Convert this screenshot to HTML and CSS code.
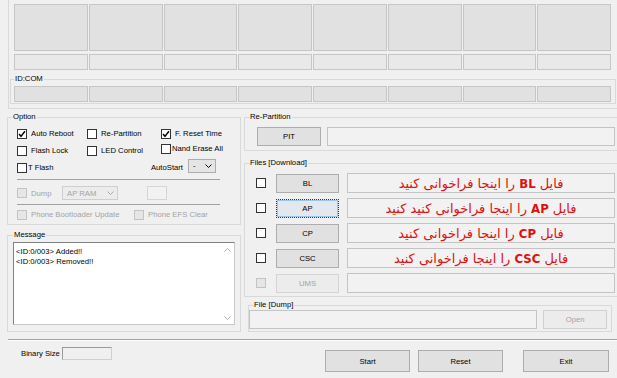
FILE: index.html
```html
<!DOCTYPE html>
<html lang="en">
<head>
    <meta charset="UTF-8">
    <title>Odin3</title>
    <link rel="stylesheet" href="styles.css">
</head>
<body>
    <div class="top-box">
        <div class="slots slots-big">
            <div class="slot"></div><div class="slot"></div><div class="slot"></div><div class="slot"></div>
            <div class="slot"></div><div class="slot"></div><div class="slot"></div><div class="slot"></div>
        </div>
        <div class="slots slots-small">
            <div class="slot"></div><div class="slot"></div><div class="slot"></div><div class="slot"></div>
            <div class="slot"></div><div class="slot"></div><div class="slot"></div><div class="slot"></div>
        </div>
        <fieldset class="group idcom">
            <legend>ID:COM</legend>
            <div class="slots slots-com">
                <div class="slot"></div><div class="slot"></div><div class="slot"></div><div class="slot"></div>
                <div class="slot"></div><div class="slot"></div><div class="slot"></div><div class="slot"></div>
            </div>
        </fieldset>
    </div>

    <div class="main">
        <div class="left-col">
            <fieldset class="group option">
                <legend>Option</legend>
                <div class="opt-row">
                    <label class="opt col1"><span class="check checked"><svg width="8" height="8" viewBox="0 0 8 8"><path d="M1 4 L3 6.3 L7 1.2" fill="none" stroke="#000" stroke-width="1.4"/></svg></span>Auto Reboot</label>
                    <label class="opt col2"><span class="check"></span>Re-Partition</label>
                    <label class="opt"><span class="check checked"><svg width="8" height="8" viewBox="0 0 8 8"><path d="M1 4 L3 6.3 L7 1.2" fill="none" stroke="#000" stroke-width="1.4"/></svg></span>F. Reset Time</label>
                </div>
                <div class="opt-row">
                    <label class="opt col1"><span class="check"></span>Flash Lock</label>
                    <label class="opt col2"><span class="check"></span>LED Control</label>
                    <label class="opt opt-up"><span class="check tight"></span>Nand Erase All</label>
                </div>
                <div class="opt-row">
                    <label class="opt col1"><span class="check tight"></span>T Flash</label>
                    <div class="autostart">
                        <span>AutoStart</span>
                        <span class="select select-auto">-<svg width="7" height="4" viewBox="0 0 7 4"><path d="M0.5 0.5 L3.5 3.5 L6.5 0.5" fill="none" stroke="#000"/></svg></span>
                    </div>
                </div>
                <div class="sep"></div>
                <div class="dump-row">
                    <label class="opt disabled dump-label"><span class="check"></span>Dump</label>
                    <span class="select select-dump">AP RAM<svg width="7" height="4" viewBox="0 0 7 4"><path d="M0.5 0.5 L3.5 3.5 L6.5 0.5" fill="none" stroke="#a8a8a8"/></svg></span>
                    <span class="dump-box"></span>
                </div>
                <div class="sep"></div>
                <div class="opt-row phone-row">
                    <label class="opt disabled phone-col"><span class="check"></span>Phone Bootloader Update</label>
                    <label class="opt disabled"><span class="check"></span>Phone EFS Clear</label>
                </div>
            </fieldset>

            <fieldset class="group message">
                <legend>Message</legend>
                <div class="msg-box">
                    <div class="msg-text">&lt;ID:0/003&gt; Added!!<br>&lt;ID:0/003&gt; Removed!!</div>
                    <div class="msg-scroll">
                        <svg width="7" height="4" viewBox="0 0 7 4"><path d="M0.5 3.5 L3.5 0.5 L6.5 3.5" fill="none" stroke="#b0b0b0"/></svg>
                        <svg width="7" height="4" viewBox="0 0 7 4"><path d="M0.5 0.5 L3.5 3.5 L6.5 0.5" fill="none" stroke="#b0b0b0"/></svg>
                    </div>
                </div>
            </fieldset>
        </div>

        <div class="right-col">
            <fieldset class="group repartition">
                <legend>Re-Partition</legend>
                <div class="file-line">
                    <button class="btn btn-pit">PIT</button>
                    <div class="field field-pit"></div>
                </div>
            </fieldset>

            <fieldset class="group files">
                <legend>Files [Download]</legend>
                <div class="file-row">
                    <span class="check"></span>
                    <button class="btn btn-file">BL</button>
                    <div class="field field-file" dir="rtl">فایل <b>BL</b> را اینجا فراخوانی کنید</div>
                </div>
                <div class="file-row">
                    <span class="check"></span>
                    <button class="btn btn-file focused">AP</button>
                    <div class="field field-file" dir="rtl">فایل <b>AP</b> را اینجا فراخوانی کنید کنید</div>
                </div>
                <div class="file-row">
                    <span class="check"></span>
                    <button class="btn btn-file">CP</button>
                    <div class="field field-file" dir="rtl">فایل <b>CP</b> را اینجا فراخوانی کنید</div>
                </div>
                <div class="file-row">
                    <span class="check"></span>
                    <button class="btn btn-file">CSC</button>
                    <div class="field field-file" dir="rtl">فایل <b>CSC</b> را اینجا فراخوانی کنید</div>
                </div>
                <div class="file-row disabled">
                    <span class="check"></span>
                    <button class="btn btn-file">UMS</button>
                    <div class="field field-file"></div>
                </div>
            </fieldset>

            <fieldset class="group dump">
                <legend>File [Dump]</legend>
                <div class="file-line">
                    <div class="field field-dump"></div>
                    <button class="btn btn-open">Open</button>
                </div>
            </fieldset>
        </div>
    </div>

    <div class="hsep"></div>

    <div class="bottom">
        <div class="binary">
            <span class="binary-label">Binary Size</span>
            <span class="binary-box"></span>
        </div>
        <div class="actions">
            <button class="btn btn-big">Start</button>
            <button class="btn btn-big btn-reset">Reset</button>
            <button class="btn btn-big btn-exit">Exit</button>
        </div>
    </div>
</body>
</html>
```

FILE: styles.css
```css
:root {
    --window-bg: #f0f0f0;
    --group-border: #d9d9d9;
    --slot-bg: #e1e1e1;
    --slot-border: #c6c6c6;
    --field-bg: #f2f2f2;
    --field-border: #c4c4c4;
    --button-bg: #e1e1e1;
    --button-border: #adadad;
    --disabled-text: #a3a3a3;
    --red-text: #e01010;
}

* {
    box-sizing: border-box;
}

body {
    margin: 0;
    width: 617px;
    height: 378px;
    overflow: hidden;
    background-color: var(--window-bg);
    font-family: "Liberation Sans", Arial, sans-serif;
    font-size: 7.7px;
    color: #000;
}

button {
    font-family: inherit;
    font-size: inherit;
    color: inherit;
    padding: 0;
}

/* group boxes */
.group {
    margin: 0;
    min-width: 0;
    border: 1px solid var(--group-border);
    padding: 0;
}

.group legend {
    padding: 0 1px;
    line-height: 10px;
    margin-left: 4px;
}

/* device slots on top */
.top-box {
    margin: -1px 0 0 8px;
    width: 612px;
    height: 110px;
    border: 1px solid var(--group-border);
    padding: 4px 0 0 5px;
}

.slots {
    width: 597px;
    display: grid;
    grid-template-columns: repeat(8, 1fr);
    gap: 1px;
}

.slot {
    background-color: var(--slot-bg);
    border: 1px solid var(--slot-border);
}

.slots-big .slot {
    height: 47px;
}

.slots-small {
    margin-top: 3px;
}

.slots-small .slot {
    height: 16px;
    background-color: #e9e9e9;
}

.idcom {
    margin: 4px 0 0 -4px;
    width: 606px;
    padding: 2px 4px 1px 3px;
}

.idcom legend {
    margin-left: 0;
}

.slots-com .slot {
    height: 16px;
}

/* main area */
.main {
    display: flex;
    margin-top: 3px;
}

.left-col {
    margin-left: 7px;
    width: 235px;
}

.right-col {
    margin-left: 3px;
    width: 375px;
}

/* option group */
.option {
    padding: 3px 6px 1px 9px;
}

.option legend {
    margin-left: -5px;
}

.opt-row {
    display: flex;
    align-items: center;
    height: 17px;
}

.opt {
    display: flex;
    align-items: center;
}

.col1 {
    width: 70px;
}

.col2 {
    width: 74px;
}

.opt-up {
    margin-top: -4px;
}

.check {
    width: 10px;
    height: 10px;
    border: 1px solid #333;
    background-color: #fff;
    margin-right: 4px;
    display: flex;
    align-items: center;
    justify-content: center;
    flex-shrink: 0;
}

.check.tight {
    margin-right: 1px;
}

.disabled {
    color: var(--disabled-text);
}

.disabled .check {
    border-color: #c3c3c3;
    background-color: #e6e6e6;
}

.autostart {
    margin-left: auto;
    margin-right: 18px;
    display: flex;
    align-items: center;
    gap: 5px;
}

.select {
    display: flex;
    align-items: center;
    justify-content: space-between;
    height: 14px;
    border: 1px solid var(--button-border);
    background-color: #e5e5e5;
    padding: 0 3px 0 4px;
}

.select-auto {
    width: 28px;
    margin-top: -4px;
}

.select-dump {
    width: 56px;
    color: var(--disabled-text);
    border-color: #cfcfcf;
    background-color: #ececec;
}

.sep {
    width: 203px;
    height: 1px;
    background-color: #a0a0a0;
    margin-top: 3px;
}

.dump-row {
    display: flex;
    align-items: center;
    height: 14px;
    margin: 6px 0 4px;
}

.dump-label {
    width: 45px;
}

.dump-box {
    width: 20px;
    height: 14px;
    margin-left: 29px;
    border: 1px solid #d6d6d6;
    background-color: #f2f2f2;
}

.phone-row {
    margin-top: 1px;
}

.phone-col {
    width: 117px;
}

/* message group */
.message {
    margin-top: 5px;
    padding: 2px 5px 6px 5px;
}

.message legend {
    margin-left: 0;
}

.msg-box {
    display: flex;
    width: 222px;
    height: 83px;
    background-color: #fff;
    border: 1px solid #828282;
    border-right-color: #c8c8c8;
    border-bottom-color: #c8c8c8;
}

.msg-text {
    flex: 1;
    padding: 4px 0 0 2px;
    line-height: 10px;
}

.msg-scroll {
    width: 14px;
    display: flex;
    flex-direction: column;
    justify-content: space-between;
    align-items: center;
    padding: 5px 0 4px;
}

/* buttons and fields */
.btn {
    background-color: var(--button-bg);
    border: 1px solid var(--button-border);
    text-align: center;
}

.btn.focused {
    border: 1px dotted #1f3c5e;
    box-shadow: inset 0 0 0 1px #9cc3e8;
    background-color: #e3e8ee;
}

.field {
    border: 1px solid var(--field-border);
    background-color: var(--field-bg);
}

.file-line {
    display: flex;
    align-items: center;
}

.repartition {
    padding: 5px 2px 4px 12px;
}

.repartition legend {
    margin-left: -7px;
    padding-left: 0;
}

.btn-pit {
    width: 64px;
    height: 19px;
}

.field-pit {
    width: 288px;
    height: 19px;
    margin-left: 6px;
}

.files {
    margin-top: 7px;
    padding: 5px 2px 3px 11px;
}

.files legend {
    margin-left: -6px;
    padding-left: 0;
}

.file-row {
    display: flex;
    align-items: center;
    height: 20px;
    margin-bottom: 5px;
}

.file-row:last-child {
    margin-bottom: 0;
}

.file-row .check {
    margin-right: 10px;
}

.btn-file {
    width: 63px;
    height: 19px;
}

.file-row.disabled .btn-file {
    color: var(--disabled-text);
    border-color: #d4d4d4;
    background-color: #ececec;
}

.field-file {
    width: 268px;
    height: 20px;
    margin-left: 8px;
    display: flex;
    align-items: center;
    justify-content: center;
    font-family: "DejaVu Sans", sans-serif;
    font-size: 13px;
    color: var(--red-text);
    white-space: pre;
}

.field-file b {
    font-weight: bold;
    font-family: "DejaVu Sans Condensed", "DejaVu Sans", sans-serif;
}

.dump {
    margin: 3px 0 0 4px;
    width: 364px;
    padding: 0 4px 2px 0;
}

.dump legend {
    margin-left: 5px;
    padding-left: 0;
}

.field-dump {
    width: 289px;
    height: 19px;
}

.btn-open {
    width: 64px;
    height: 19px;
    margin-left: 6px;
    color: var(--disabled-text);
    border-color: #d0d0d0;
    background-color: #ececec;
}

/* bottom bar */
.hsep {
    margin: 7px 0 0 8px;
    height: 1px;
    background-color: #a0a0a0;
    box-shadow: 0 1px 0 #fff;
}

.bottom {
    display: flex;
    align-items: flex-start;
}

.binary {
    display: flex;
    align-items: center;
    margin: 7px 0 0 21px;
}

.binary-label {
    width: 41px;
}

.binary-box {
    width: 50px;
    height: 13px;
    border: 1px solid #9a9a9a;
    border-right-color: #d0d0d0;
    border-bottom-color: #d0d0d0;
    background-color: #f0f0f0;
}

.actions {
    display: flex;
    margin: 10px 0 0 213px;
}

.btn-big {
    width: 85px;
    height: 22px;
}

.btn-reset {
    margin-left: 8px;
}

.btn-exit {
    margin-left: 20px;
    width: 86px;
}
```
